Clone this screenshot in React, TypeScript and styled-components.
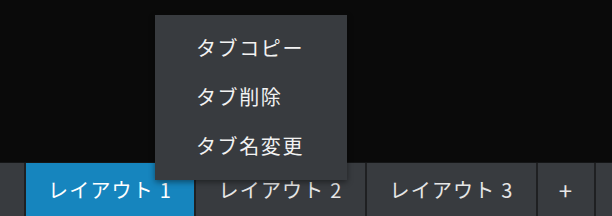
import React from 'react';
import styled, { createGlobalStyle } from 'styled-components';

const GlobalStyle = createGlobalStyle`
  html, body {
    margin: 0;
    padding: 0;
    background: #0a0a0a;
  }
  body {
    font-family: "Noto Sans CJK JP", "Noto Sans", "Liberation Sans", sans-serif;
  }
`;

const Screen = styled.div`
  position: relative;
  width: 612px;
  height: 216px;
  display: flex;
  flex-direction: column;
  overflow: hidden;
  background: #0a0a0a;
`;

const Canvas = styled.div`
  flex: 1;
`;

const TabBar = styled.div`
  height: 53px;
  display: flex;
  gap: 2px;
  background: #1f2022;
  border-top: 1px solid #141516;
`;

const Tab = styled.div<{ $active?: boolean; $width: number; $big?: boolean }>`
  width: ${p => p.$width}px;
  flex-shrink: 0;
  display: flex;
  align-items: center;
  justify-content: center;
  background: ${p => (p.$active ? '#1685be' : '#383b3f')};
  color: ${p => (p.$active ? '#ffffff' : '#e6e6e6')};
  font-size: ${p => (p.$big ? 24 : 20)}px;
  letter-spacing: 1.2px;
`;

const Filler = styled.div`
  flex: 1;
  background: #383b3f;
`;

const Menu = styled.div`
  position: absolute;
  left: 155px;
  top: 15px;
  width: 192px;
  padding: 8px 0 10px;
  background: #383b3f;
  box-shadow: 0 2px 6px rgba(0, 0, 0, 0.45);
`;

const MenuItem = styled.div`
  height: 49px;
  display: flex;
  align-items: center;
  padding-left: 41px;
  color: #f2f2f2;
  font-size: 20px;
  letter-spacing: 1.6px;
`;

const tabs = ['レイアウト 1', 'レイアウト 2', 'レイアウト 3'];
const menuItems = ['タブコピー', 'タブ削除', 'タブ名変更'];

export default function App() {
  return (
    <Screen>
      <GlobalStyle />
      <Canvas />
      <TabBar>
        <Tab $width={24} />
        {tabs.map((t, i) => (
          <Tab key={t} $width={i === 0 ? 168 : 169} $active={i === 0}>
            {t}
          </Tab>
        ))}
        <Tab $width={56} $big>+</Tab>
        <Filler />
      </TabBar>
      <Menu>
        {menuItems.map(m => (
          <MenuItem key={m}>{m}</MenuItem>
        ))}
      </Menu>
    </Screen>
  );
}
